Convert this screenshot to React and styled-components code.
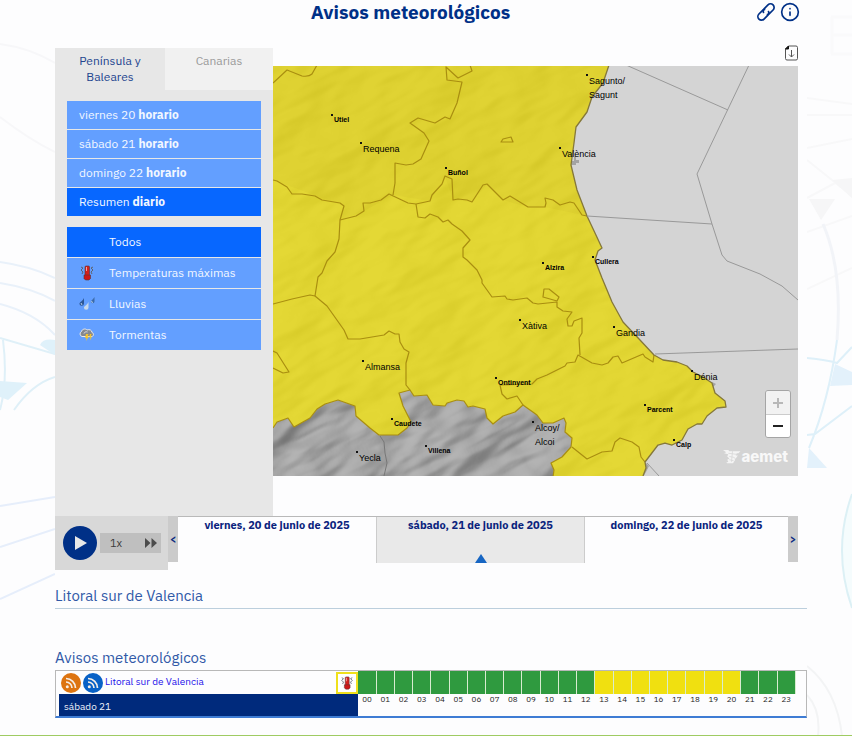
import React, { useState } from "react";
import styled, { createGlobalStyle } from "styled-components";
import { Info } from "lucide-react";

const Global = createGlobalStyle`
  *, *::before, *::after { box-sizing: border-box; }
  body {
    margin: 0;
    background: #fdfdfe;
    color: #222;
    font-family: "IBM Plex Sans", "Noto Sans", sans-serif;
    font-size: 12px;
    line-height: 16px;
  }
  button { font: inherit; border: 0; padding: 0; cursor: pointer; }
  ul { list-style: none; margin: 0; padding: 0; }
  h1, h2 { margin: 0; }
`;

const Page = styled.div`
  position: relative;
  min-height: 100vh;
  display: flex;
  flex-direction: column;
  overflow: hidden;
`;

const Backdrop = styled.svg`
  position: absolute;
  top: 0;
  height: 736px;
  ${(p) => (p.$side === "left" ? "left: 0; width: 55px;" : "right: 0; width: 45px;")}
`;

const Content = styled.main`
  position: relative;
  margin: 0 45px 0 55px;
  flex: 1;
`;

const Viewer = styled.section`
  margin-right: 9px;
`;

const Header = styled.header`
  display: flex;
  align-items: center;
  height: 24px;
  color: #003087;
`;

const Title = styled.h1`
  flex: 1;
  padding-left: 10px;
  text-align: center;
  font-size: 19px;
  line-height: 24px;
  font-weight: 700;
`;

const HeaderTools = styled.div`
  display: flex;
  align-items: center;
  gap: 4px;
  margin-right: -2px;
`;

const IconButton = styled.button`
  display: flex;
  background: none;
  color: inherit;
`;

const Panels = styled.div`
  display: grid;
  grid-template-columns: 218px minmax(0, 1fr);
  margin-top: 24px;
`;

const Sidebar = styled.aside`
  background: #e7e7e7;
  min-height: 468px;
`;

const Tabs = styled.div`
  display: grid;
  grid-template-columns: 110px 1fr;
  align-items: start;
`;

const Tab = styled.button`
  height: ${(p) => (p.$active ? "48px" : "42px")};
  padding: 5px 16px 0;
  display: flex;
  justify-content: center;
  background: ${(p) => (p.$active ? "#e7e7e7" : "#f1f1f1")};
  color: ${(p) => (p.$active ? "#23458f" : "#9a9a9a")};
`;

const MenuList = styled.ul`
  display: flex;
  flex-direction: column;
  gap: 1px;
  margin: ${(p) => (p.$first ? "5px" : "11px")} 12px 0;
`;

const MenuButton = styled.button`
  display: flex;
  align-items: center;
  width: 100%;
  height: ${(p) => (p.$tall ? "30px" : "28px")};
  padding-left: 12px;
  text-align: left;
  color: #f2f7ff;
  background: ${(p) => (p.$active ? "#0767ff" : "#639fff")};
`;

const MenuIcon = styled.span`
  display: flex;
  width: 30px;
`;

const MapColumn = styled.div`
  min-width: 0;
`;

const MapTools = styled.div`
  display: flex;
  justify-content: flex-end;
  align-items: center;
  height: 18px;
  padding-bottom: 8px;
`;

const MapFrame = styled.div`
  position: relative;
`;

const MapSvg = styled.svg`
  display: block;
  width: 100%;
  height: auto;
`;

const ZoomBox = styled.div`
  position: absolute;
  right: 7px;
  bottom: 38px;
  display: flex;
  flex-direction: column;
  width: 26px;
  border: 1px solid #a5a5a5;
  border-radius: 3px;
  overflow: hidden;
`;

const ZoomButton = styled.button`
  display: flex;
  align-items: center;
  justify-content: center;
  height: 23px;
  background: ${(p) => (p.disabled ? "#f2f2f2" : "#fff")};
  color: ${(p) => (p.disabled ? "#b8b8b8" : "#222")};
  & + & { border-top: 1px solid #ccc; }
`;

const Brand = styled.div`
  position: absolute;
  right: 10px;
  bottom: 10px;
  display: flex;
  align-items: center;
  gap: 1px;
  color: #f8f8f8;
  font-family: Inter, sans-serif;
  font-size: 15px;
  line-height: 18px;
  font-weight: 800;
`;

const Timeline = styled.div`
  display: grid;
  grid-template-columns: 113px 10px minmax(0, 198fr) minmax(0, 209fr) minmax(0, 203fr) 10px;
  align-items: start;
`;

const Player = styled.div`
  display: flex;
  align-items: center;
  gap: 3px;
  height: 54px;
  padding-left: 8px;
  background: #d8d8d8;
`;

const PlayButton = styled.button`
  display: flex;
  align-items: center;
  justify-content: center;
  width: 34px;
  height: 34px;
  padding-left: 1px;
  border-radius: 50%;
  background: #003087;
  color: #e8e8e8;
`;

const Speed = styled.button`
  display: flex;
  align-items: center;
  justify-content: space-between;
  width: 61px;
  height: 20px;
  padding: 0 4px 0 10px;
  background: #bfbfbf;
  color: #3c3c3c;
  font-size: 11px;
`;

const Arrow = styled.button`
  height: 46px;
  background: #cbcbcb;
  color: #0a2a80;
  font-size: 11px;
  font-weight: 700;
`;

const Day = styled.button`
  display: flex;
  flex-direction: column;
  align-items: center;
  justify-content: space-between;
  height: 47px;
  border-top: 1px solid #b9b9b9;
  background: ${(p) => (p.$active ? "#e9e9e9" : "transparent")};
  box-shadow: ${(p) => (p.$active ? "inset 1px 0 #ccc, inset -1px 0 #ccc" : "none")};
  color: #0a237d;
  font-size: 11px;
  font-weight: 700;
  white-space: nowrap;
`;

const Heading = styled.h2`
  margin-top: ${(p) => (p.$ruled ? "14px" : "37px")};
  height: ${(p) => (p.$ruled ? "25px" : "24px")};
  border-bottom: ${(p) => (p.$ruled ? "1px solid #bccfdd" : "0")};
  color: #3059a7;
  font-size: 15px;
  line-height: 24px;
  font-weight: 400;
`;

const TableBox = styled.div`
  border: 1px solid #b8b8b8;
  border-bottom: 2px solid #3e7cd4;
  padding: 0 10px 0 3px;
`;

const WarningsTable = styled.table`
  width: 100%;
  table-layout: fixed;
  border-collapse: collapse;
`;

const LabelCol = styled.col`
  width: 299px;
`;

const AreaCell = styled.th`
  padding: 0;
  height: 23px;
  font-weight: 400;
  text-align: left;
`;

const AreaRow = styled.div`
  display: flex;
  align-items: center;
  height: 23px;
  padding-left: 2px;
  gap: 2px;
`;

const FeedLink = styled.a`
  display: flex;
`;

const AreaLink = styled.a`
  flex: 1;
  padding-bottom: 2px;
  color: #1d12ea;
  font-size: 10px;
  text-decoration: none;
`;

const WarningIcon = styled.span`
  display: flex;
  align-items: center;
  justify-content: center;
  width: 22px;
  height: 22px;
  border: 2px solid #efe01c;
  background: #fff;
`;

const LevelCell = styled.td`
  padding: 0;
  border-right: 1px solid #d8ecd0;
  background: ${(p) => (p.$yellow ? "#f0e010" : "#2f9a3f")};
`;

const DayCell = styled.th`
  height: 22px;
  padding: 5px 5px 1px;
  background: #002a7c;
  color: #eef2fa;
  font-size: 10px;
  line-height: 16px;
  font-weight: 400;
  text-align: left;
`;

const HourCell = styled.td`
  padding: 0;
  color: #222;
  font-size: 8px;
  line-height: 10px;
  text-align: center;
  vertical-align: top;
`;

const FootRule = styled.div`
  position: relative;
  height: 1px;
  margin-top: 17px;
  background: #9fcb62;
`;

const Thermometer = ({ size = 16 }) => (
  <svg width={size} height={size} viewBox="0 0 16 16" aria-hidden="true">
    <path d="M2 2l2 1-2 2 2 2-1 2M14 2l-2 1 2 2-2 2 1 2" stroke="#5d6470" fill="none" />
    <rect x="6" y="1" width="4.500" height="11" rx="1" fill="#d5201c" stroke="#54353b" strokeWidth=".6" />
    <path d="M5 10h6.500v3.500L10 15H6.500L5 13.500z" fill="#cf1717" stroke="#54353b" strokeWidth=".6" />
    <path d="M7.500 2v4" stroke="#f3a19d" />
  </svg>
);

const Rain = () => (
  <svg width="16" height="14" viewBox="0 0 16 14" aria-hidden="true">
    <path d="M5 1v5.500a2.300 2.300 0 0 1-4.600 0C1 5 4 3.500 5 1z" fill="#2c5796" />
    <path d="M15.500 0v4.500a1.800 1.800 0 0 1-3.600 0c.6-1.500 2.600-2.500 3.600-4.500z" fill="#3b6ba9" />
    <path d="M9.500 5v5.500a2.300 2.300 0 0 1-4.600 0C5.500 9 8.500 7.500 9.500 5z" fill="#c8d9ea" />
    <path d="M2 6l1 2M12.500 4l1 2" stroke="#b7cfe9" />
  </svg>
);

const Storm = () => (
  <svg width="16" height="14" viewBox="0 0 16 14" aria-hidden="true">
    <path d="M3 8.500a2.700 2.700 0 0 1-.5-5C3 1 6.500.2 8 2c2.500-1 5 .2 5 2.500 2 .7 1.800 3.500 0 4z" fill="#85888f" stroke="#e9eaec" />
    <path d="M5 5.500c.5-1.500 2-2 3.500-1.500" stroke="#e2e2e2" fill="none" />
    <path d="M7 6l-1 4h1.500L7 13l3-4.500H8.500L9.500 6zM11 6l-.8 3.200h1.200L11 12.500l2-4h-1.200L12.500 6z" fill="#f4c32c" />
  </svg>
);

const ChainLink = () => (
  <svg width="20" height="20" viewBox="0 0 20 20" fill="none" stroke="currentColor" strokeWidth="1.700" aria-hidden="true">
    <g transform="rotate(-45 10 10)">
      <path d="M12.300 10.800A3.600 3.600 0 0 1 8.800 13.600H3.600a3.600 3.600 0 0 1 0-7.200h5.200a3.600 3.600 0 0 1 2.600 1.200" />
      <path d="M7.700 9.200A3.600 3.600 0 0 1 11.200 6.400h5.200a3.600 3.600 0 0 1 0 7.200h-5.200a3.600 3.600 0 0 1-2.600-1.200" />
    </g>
  </svg>
);

const PlayMark = () => (
  <svg width="12" height="14" viewBox="0 0 12 14" aria-hidden="true">
    <path d="M0 0l12 7-12 7z" fill="currentColor" />
  </svg>
);

const Feed = ({ color }) => (
  <svg width="20" height="20" viewBox="0 0 20 20" aria-hidden="true">
    <circle cx="10" cy="10" r="10" fill={color} />
    <circle cx="6.300" cy="13.700" r="1.500" fill="#f5eee7" />
    <path d="M5 9a6 6 0 0 1 6 6M5 5.500A9.500 9.500 0 0 1 14.500 15" stroke="#f5eee7" strokeWidth="1.700" fill="none" />
  </svg>
);

const FastForward = () => (
  <svg width="12" height="10" viewBox="0 0 12 10" aria-hidden="true">
    <path d="M0 0l5.500 5L0 10zM6.500 0L12 5l-5.500 5z" fill="#4c4c4c" />
  </svg>
);

const Download = () => (
  <svg width="13" height="16" viewBox="0 0 13 16" fill="none" stroke="#555" aria-hidden="true">
    <path d="M3.500 1H11a1.500 1.500 0 0 1 1.500 1.500v11A1.500 1.500 0 0 1 11 15H2a1.500 1.500 0 0 1-1.500-1.500V4z" />
    <path d="M.5 4l3-3v3z" fill="#111" stroke="#111" />
    <path d="M6.500 5v7M4 9.500L6.500 12 9 9.500" />
  </svg>
);

const BrandMark = () => (
  <svg width="18" height="16" viewBox="0 0 17 15" aria-hidden="true">
    <path d="M0 1h5l1 1h10.500l-2 2H13l-1 2h2l-2 3h-1.500l1 1-2 3.500H4L3 13l2-1-1-2 2-1-2-2 1-2L1 4l2-1z" fill="#f4f4f4" />
    <path d="M5 4l8 1M6 7l5 1M6 10l4 1M9 2L8 12" stroke="#d9d9d9" strokeWidth=".8" />
  </svg>
);

const COAST =
  "L643 476L646 468L645 462L658 445L665 443L672 445L682 440L688 429L697 424L702 424L707 416L717 408L726 407L725 401L715 393L712 383L703 377L693 372L687 366L677 362L663 360L654 355L640 340L623 322L612 302L602 278L595 260L598 251L602 248L595 233L587 216L577 190L571 165L574 143L576 127L587 112L592 97L603 83L609 65";
const SOUTH =
  "M273 428L277 422L288 418L294 427L310 418L317 409L325 404L338 400L355 406L356 416L370 428L379 435L398 435L407 428L411 422L403 406L399 393L410 390L414 396L427 395L433 405L445 406L447 403L457 400L464 401L468 407L473 406L485 409L487 418L493 424L503 416L515 412L523 405L537 415L543 423L553 423L564 418L566 423L565 432L572 438L571 447L562 457L551 463L554 470L553 477";

const BORDERS = [
  "M273 83L287 70L302 76Q309 77 312 74L317 65",
  "M470 65L472 71L458 78L446 67L447 80L462 82L457 103L450 119L445 117L435 123L418 118L410 123L424 133L429 141L421 159L413 164L406 165L395 163L395 183L393 195",
  "M501 142L503 139L511 137L513 142Z",
  "M273 180L277 181L287 187L292 194L302 194L315 196L322 200L340 203L344 206L340 220L339 239L335 252L327 261L322 273L318 277L315 296L310 295L292 299L273 304",
  "M315 296L327 306L344 330L348 339L360 339L384 335L389 331L395 334L399 334L400 342L404 349L409 352L406 363L406 385L410 390",
  "M340 220L356 216L364 211L363 203L370 203L381 200L389 194L408 203L416 204L430 201L432 195L442 184L445 176L452 179L453 200L458 199L467 200L472 202L483 185L487 184L503 200L510 196L528 207L545 207L546 203L545 198L553 200L560 205L570 202L574 203L582 215L587 216",
  "M416 204L418 217L425 218L430 214L438 217L443 222L448 220L452 224L462 231L470 240L463 248L463 257L467 260L477 270L482 280L482 283L492 297L505 296L507 299L513 300L527 298L533 303L538 304L557 302L557 307L563 311L572 312L567 319L568 326L572 326L574 321L582 318L582 333L579 338L580 355",
  "M543 297L544 289L549 289L559 297L557 301Z",
  "M500 385L532 384L537 379L547 375L565 366L567 363L575 362L578 355L592 363L602 365L608 363L613 357L618 356L622 363L643 354L645 357L653 362L654 355",
  "M500 385L502 394L507 399L517 396L523 405",
  "M273 351L277 353L289 372L283 373L273 368",
  "M572 447L587 459L602 452L612 451L615 442L620 438L632 442L639 447L641 457L645 462",
];

const SEA_LINES = [
  "M626 65L728 110",
  "M749 65L697 174L712 224L722 255L727 261L760 274L782 286L798 300",
  "M587 216L712 224",
  "M655 354L798 349",
  "M647 463L659 476",
];

const TOWNS = [
  { x: 332, y: 115, name: "Utiel" },
  { x: 361, y: 143, name: "Requena", big: true },
  { x: 446, y: 168, name: "Buñol" },
  { x: 587, y: 75, name: "Sagunto/", second: "Sagunt", big: true },
  { x: 560, y: 148, name: "València", big: true },
  { x: 543, y: 263, name: "Alzira" },
  { x: 593, y: 257, name: "Cullera" },
  { x: 520, y: 320, name: "Xàtiva", big: true },
  { x: 614, y: 327, name: "Gandia", big: true },
  { x: 363, y: 361, name: "Almansa", big: true },
  { x: 496, y: 378, name: "Ontinyent" },
  { x: 692, y: 371, name: "Dénia", big: true },
  { x: 645, y: 405, name: "Parcent" },
  { x: 674, y: 440, name: "Calp" },
  { x: 392, y: 419, name: "Caudete" },
  { x: 426, y: 446, name: "Villena" },
  { x: 357, y: 452, name: "Yecla", big: true },
  { x: 533, y: 422, name: "Alcoy/", second: "Alcoi", big: true },
];

const TownText = styled.text`
  font-family: "Liberation Sans", Arial, sans-serif;
  font-size: ${(p) => (p.$big ? "9px" : "7px")};
  font-weight: ${(p) => (p.$big ? 400 : 700)};
  fill: #000;
`;

const Town = ({ x, y, name, second, big }) => (
  <g>
    <rect x={x - 1} y={y - 1} width="2" height="2" fill="#111" />
    <TownText $big={big} x={x + 2} y={y + (big ? 9 : 7)}>{name}</TownText>
    {second && <TownText $big={big} x={x + 2} y={y + 23}>{second}</TownText>}
  </g>
);

const WarningMap = () => (
  <MapSvg viewBox="273 66 525 410" role="img" aria-label="Mapa de avisos">
    <defs>
      <filter id="relief" x="0" y="0" width="100%" height="100%" colorInterpolationFilters="sRGB">
        <feTurbulence type="fractalNoise" baseFrequency="0.012 0.028" numOctaves="3" seed="11" />
        <feDiffuseLighting surfaceScale="16" diffuseConstant="0.86" lightingColor="#fff">
          <feDistantLight azimuth="225" elevation="50" />
        </feDiffuseLighting>
      </filter>
      <clipPath id="warned"><path d={`${SOUTH}${COAST}L273 65Z`} /></clipPath>
      <clipPath id="unwarned"><path d={`${SOUTH}L273 477Z`} /></clipPath>
    </defs>
    <rect x="273" y="65" width="525" height="412" fill="#d4d4d4" />
    <path d="M571 161h3v-5h2v4h3v3h-3v2h-5zM712 382l4 2-3 3zM645 462l4 4-3 6-3 5h-4z" fill="#a3a3a3" />
    <g clipPath="url(#unwarned)">
      <rect x="273" y="380" width="310" height="97" fill="#a6a6a6" />
      <g transform="rotate(-28 430 430)" opacity=".28">
        <rect x="230" y="300" width="400" height="260" filter="url(#relief)" />
      </g>
    </g>
    <g clipPath="url(#warned)">
      <rect x="273" y="65" width="460" height="412" fill="#e5d82d" />
      <path d="M273 65H620L587 216L545 207L528 207L503 200L487 184L472 202L453 200L445 176L430 201L393 195L364 211L340 220L344 206L273 180Z" fill="#e1d32b" />
      <g transform="rotate(-28 500 270)" opacity=".05">
        <rect x="180" y="-60" width="640" height="680" filter="url(#relief)" />
      </g>
    </g>
    <g fill="none" strokeLinejoin="round">
      <g stroke="#a98e10" strokeWidth="1.200">
        {BORDERS.map((d) => <path key={d} d={d} />)}
        <path d={SOUTH} />
      </g>
      <path d={`M643 476${COAST}`} stroke="#85783a" strokeWidth="1.300" />
      <path d="M380 436L384 442L385 453L387 463L384 476" stroke="#777" />
      <g stroke="#999" strokeWidth="1">
        {SEA_LINES.map((d) => <path key={d} d={d} />)}
      </g>
    </g>
    {TOWNS.map((t) => <Town key={t.name} {...t} />)}
  </MapSvg>
);

const PERIODS = [
  ["viernes 20", "horario"],
  ["sábado 21", "horario"],
  ["domingo 22", "horario"],
  ["Resumen", "diario"],
];

const KINDS = [
  { label: "Todos" },
  { label: "Temperaturas máximas", icon: <Thermometer /> },
  { label: "Lluvias", icon: <Rain /> },
  { label: "Tormentas", icon: <Storm /> },
];

const DAYS = ["viernes, 20 de junio de 2025", "sábado, 21 de junio de 2025", "domingo, 22 de junio de 2025"];
const HOURS = Array.from({ length: 24 }, (_, h) => h);

export default function App() {
  const [tab, setTab] = useState(0);
  const [period, setPeriod] = useState(3);
  const [kind, setKind] = useState(0);
  const [day, setDay] = useState(1);

  return (
    <>
      <Global />
      <Page>
        <Backdrop $side="left" viewBox="0 0 55 736" fill="none" aria-hidden="true">
          <path d="M0 44Q30 48 55 63M0 117Q30 140 55 152" stroke="#f7f7f9" strokeWidth="2" />
          <path d="M0 262Q30 266 55 278M0 283Q32 288 55 301M0 304Q35 313 55 335" stroke="#e9f1fa" strokeWidth="2" />
          <path d="M0 338L55 354M3 340Q8 380 0 410M14 410Q32 384 55 377" stroke="#dff0f8" strokeWidth="2" />
          <path d="M0 381L27 383L8 400L0 397zM40 345Q43 338 55 340V355z" fill="#dff1fa" />
          <path d="M0 506L55 497M0 547L55 529M0 599L55 574" stroke="#e6eefb" strokeWidth="2" />
        </Backdrop>
        <Backdrop $side="right" viewBox="0 0 45 736" fill="none" aria-hidden="true">
          <path d="M24 17h21M24 35h21M24 54h21M25 17v37" stroke="#fafafb" strokeWidth="3" />
          <path d="M0 98L45 104M0 115H45M0 148L45 139M0 160L45 196M0 198L30 182M0 232L45 216M0 289L45 268" stroke="#f8f8f9" strokeWidth="2" />
          <path d="M2 199H28L14 220zM25 180L45 178V198z" fill="#f6f6f7" />
          <path d="M16 224Q36 270 30 340" stroke="#f2f4f8" strokeWidth="3" />
          <path d="M0 358Q20 360 30 363L45 347M0 435L8 434L45 406M30 340Q22 400 2 448" stroke="#def0f9" strokeWidth="2" />
          <path d="M28 364L45 372V385L23 386zM2 448L20 468H0z" fill="#e3f1fb" />
          <path d="M45 494Q25 550 45 608" stroke="#dcf0f5" strokeWidth="2" fill="#f5fcfd" />
          <path d="M0 666Q30 690 35 736M0 695Q14 710 11 736" stroke="#f3f4f5" strokeWidth="2" />
        </Backdrop>

        <Content>
          <Viewer>
            <Header>
              <Title>Avisos meteorológicos</Title>
              <HeaderTools>
                <IconButton aria-label="Enlace"><ChainLink /></IconButton>
                <IconButton aria-label="Información"><Info size={20} strokeWidth={2} /></IconButton>
              </HeaderTools>
            </Header>

            <Panels>
              <Sidebar>
                <Tabs role="tablist">
                  {["Península y Baleares", "Canarias"].map((t, i) => (
                    <Tab key={t} role="tab" aria-selected={tab === i} $active={tab === i} onClick={() => setTab(i)}>{t}</Tab>
                  ))}
                </Tabs>
                <MenuList $first>
                  {PERIODS.map(([when, mode], i) => (
                    <li key={when}>
                      <MenuButton $active={period === i} onClick={() => setPeriod(i)}>
                        <span>{when} <b>{mode}</b></span>
                      </MenuButton>
                    </li>
                  ))}
                </MenuList>
                <MenuList>
                  {KINDS.map(({ label, icon }, i) => (
                    <li key={label}>
                      <MenuButton $tall $active={kind === i} onClick={() => setKind(i)}>
                        <MenuIcon>{icon}</MenuIcon>
                        {label}
                      </MenuButton>
                    </li>
                  ))}
                </MenuList>
              </Sidebar>

              <MapColumn>
                <MapTools>
                  <IconButton aria-label="Descargar mapa"><Download /></IconButton>
                </MapTools>
                <MapFrame>
                  <WarningMap />
                  <ZoomBox>
                    <ZoomButton disabled aria-label="Acercar">
                      <svg width="10" height="10" stroke="currentColor" strokeWidth="2"><path d="M0 5h10M5 0v10" /></svg>
                    </ZoomButton>
                    <ZoomButton aria-label="Alejar">
                      <svg width="10" height="10" stroke="currentColor" strokeWidth="2"><path d="M0 5h10" /></svg>
                    </ZoomButton>
                  </ZoomBox>
                  <Brand><BrandMark />aemet</Brand>
                </MapFrame>
              </MapColumn>
            </Panels>

            <Timeline>
              <Player>
                <PlayButton aria-label="Reproducir"><PlayMark /></PlayButton>
                <Speed aria-label="Velocidad 1x">1x<FastForward /></Speed>
              </Player>
              <Arrow aria-label="Día anterior">&lt;</Arrow>
              {DAYS.map((d, i) => (
                <Day key={d} $active={day === i} onClick={() => setDay(i)}>
                  {d}
                  {day === i && (
                    <svg width="12" height="9" viewBox="0 0 12 9" aria-hidden="true"><path d="M0 9L6 0l6 9z" fill="#1766c3" /></svg>
                  )}
                </Day>
              ))}
              <Arrow aria-label="Día siguiente">&gt;</Arrow>
            </Timeline>
          </Viewer>

          <Heading $ruled>Litoral sur de Valencia</Heading>
          <Heading>Avisos meteorológicos</Heading>
          <TableBox>
            <WarningsTable>
              <colgroup>
                <LabelCol />
                {HOURS.map((h) => <col key={h} />)}
              </colgroup>
              <tbody>
                <tr>
                  <AreaCell scope="row">
                    <AreaRow>
                      <FeedLink href="#rss" aria-label="RSS"><Feed color="#dd7410" /></FeedLink>
                      <FeedLink href="#cap" aria-label="CAP"><Feed color="#0861c6" /></FeedLink>
                      <AreaLink href="#litoral">Litoral sur de Valencia</AreaLink>
                      <WarningIcon><Thermometer size={14} /></WarningIcon>
                    </AreaRow>
                  </AreaCell>
                  {HOURS.map((h) => <LevelCell key={h} $yellow={h >= 13 && h <= 20} />)}
                </tr>
                <tr>
                  <DayCell scope="row">sábado 21</DayCell>
                  {HOURS.map((h) => <HourCell key={h}>{String(h).padStart(2, "0")}</HourCell>)}
                </tr>
              </tbody>
            </WarningsTable>
          </TableBox>
        </Content>
        <FootRule />
      </Page>
    </>
  );
}
